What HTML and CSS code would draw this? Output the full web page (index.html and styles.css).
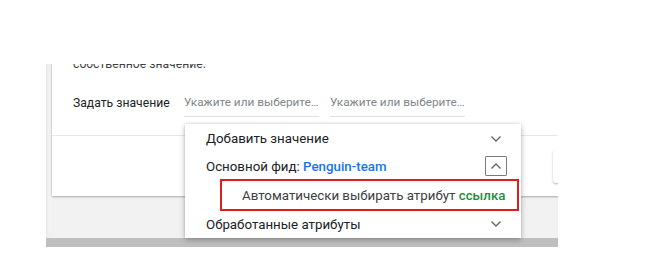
FILE: index.html
```html
<!DOCTYPE html>
<html lang="ru">
<head>
<meta charset="utf-8">
<title>Задать значение</title>
<link rel="stylesheet" href="styles.css">
</head>
<body>
<div class="viewport">
  <div class="card">
    <p class="desc">собственное значение.</p>
    <div class="row">
      <span class="label">Задать значение</span>
      <div class="input">Укажите или выберите…</div>
      <div class="input">Укажите или выберите…</div>
    </div>
    <div class="footer">
      <div class="btn"></div>
    </div>
  </div>
  <div class="spacer"></div>
  <div class="scrollbar"></div>
</div>

<div class="menu">
  <div class="item item-1">
    <span class="text">Добавить значение</span>
    <span class="icon"><svg width="12" height="8" viewBox="0 0 12 8"><path d="M1.5 1.5 L6 6 L10.5 1.5" fill="none" stroke="#5f6368" stroke-width="1.3"/></svg></span>
  </div>
  <div class="item item-2">
    <span class="text">Основной фид: <span class="feed">Penguin-team</span></span>
    <span class="icon icon-box"><svg width="12" height="8" viewBox="0 0 12 8"><path d="M1.5 6.5 L6 2 L10.5 6.5" fill="none" stroke="#5f6368" stroke-width="1.3"/></svg></span>
  </div>
  <div class="item item-3">
    <span class="text">Автоматически выбирать атрибут <span class="link">ссылка</span></span>
  </div>
  <div class="item item-4">
    <span class="text">Обработанные атрибуты</span>
    <span class="icon"><svg width="12" height="8" viewBox="0 0 12 8"><path d="M1.5 1.5 L6 6 L10.5 1.5" fill="none" stroke="#5f6368" stroke-width="1.3"/></svg></span>
  </div>
</div>
</body>
</html>
```
FILE: styles.css
```css
html, body {
  margin: 0;
  padding: 0;
  background: #ffffff;
}
body {
  font-family: Roboto, "Liberation Sans", Arial, sans-serif;
  color: #202124;
  width: 650px;
  height: 277px;
  overflow: hidden;
  position: relative;
}
.viewport {
  margin: 64px 0 0 46px;
  width: 512px;
  height: 183px;
  background: #f2f2f2;
  overflow: hidden;
  display: flex;
  flex-direction: column;
  align-items: flex-start;
  padding-left: 6px;
  box-sizing: border-box;
  box-shadow: inset 3px 0 3px -2px rgba(0,0,0,0.06);
}
.card {
  flex-shrink: 0;
  width: 620px;
  height: 158px;
  margin-top: -26px;
  background: #ffffff;
  box-shadow: 0 1px 2px rgba(0,0,0,0.28), 0 0 1px rgba(0,0,0,0.12);
  padding: 16px 0 0 21px;
  box-sizing: border-box;
}
.desc {
  margin: 0;
  font-size: 12.2px;
  line-height: 20px;
  color: #3c4043;
}
.row {
  margin-top: 13px;
  height: 32px;
  display: flex;
  align-items: center;
}
.label {
  font-size: 12.2px;
  color: #202124;
  width: 111px;
  flex-shrink: 0;
}
.input {
  width: 135px;
  height: 28px;
  box-sizing: border-box;
  border-bottom: 1px solid #e0e0e0;
  font-size: 11.8px;
  line-height: 27px;
  color: #80868b;
  margin-right: 11px;
  white-space: nowrap;
}
.footer {
  margin: 16px 0 0 -21px;
  border-top: 1px solid #e6e6e6;
  height: 60px;
  padding: 14px 0 0 501px;
  box-sizing: content-box;
}
.btn {
  width: 80px;
  height: 33px;
  border-radius: 3px;
  background: #ffffff;
  box-shadow: 0 1px 2px rgba(0,0,0,0.3);
}
.spacer {
  flex: 1;
}
.scrollbar {
  flex-shrink: 0;
  height: 9px;
  width: 512px;
  margin-left: -6px;
  background: #bfbfbf;
}
.menu {
  position: absolute;
  left: 185px;
  top: 124px;
  width: 336px;
  background: #ffffff;
  box-shadow: 0 2px 6px rgba(0,0,0,0.28), 0 0 2px rgba(0,0,0,0.12);
  display: flex;
  flex-direction: column;
}
.item {
  display: flex;
  align-items: center;
  padding: 0 14px 0 21px;
  font-size: 13.3px;
  color: #202124;
}
.item .text {
  flex: 1;
  white-space: nowrap;
}
.item-1 { height: 29px; }
.item-2 { height: 26px; }
.item-4 { height: 26px; padding-bottom: 1px; }
.item-3 {
  height: 32px;
  box-sizing: border-box;
  margin: 0 2px 0 35px;
  padding: 0 0 0 20px;
  border: 2px solid #e21b1b;
  color: #3c4043;
}
.icon {
  width: 22px;
  height: 20px;
  display: flex;
  align-items: center;
  justify-content: center;
  box-sizing: border-box;
}
.icon-box {
  border: 1px solid #7a7a7a;
  border-radius: 1px;
}
.feed {
  color: #1a73e8;
  font-weight: 500;
}
.link {
  color: #1e8e3e;
  font-weight: 500;
}
```
